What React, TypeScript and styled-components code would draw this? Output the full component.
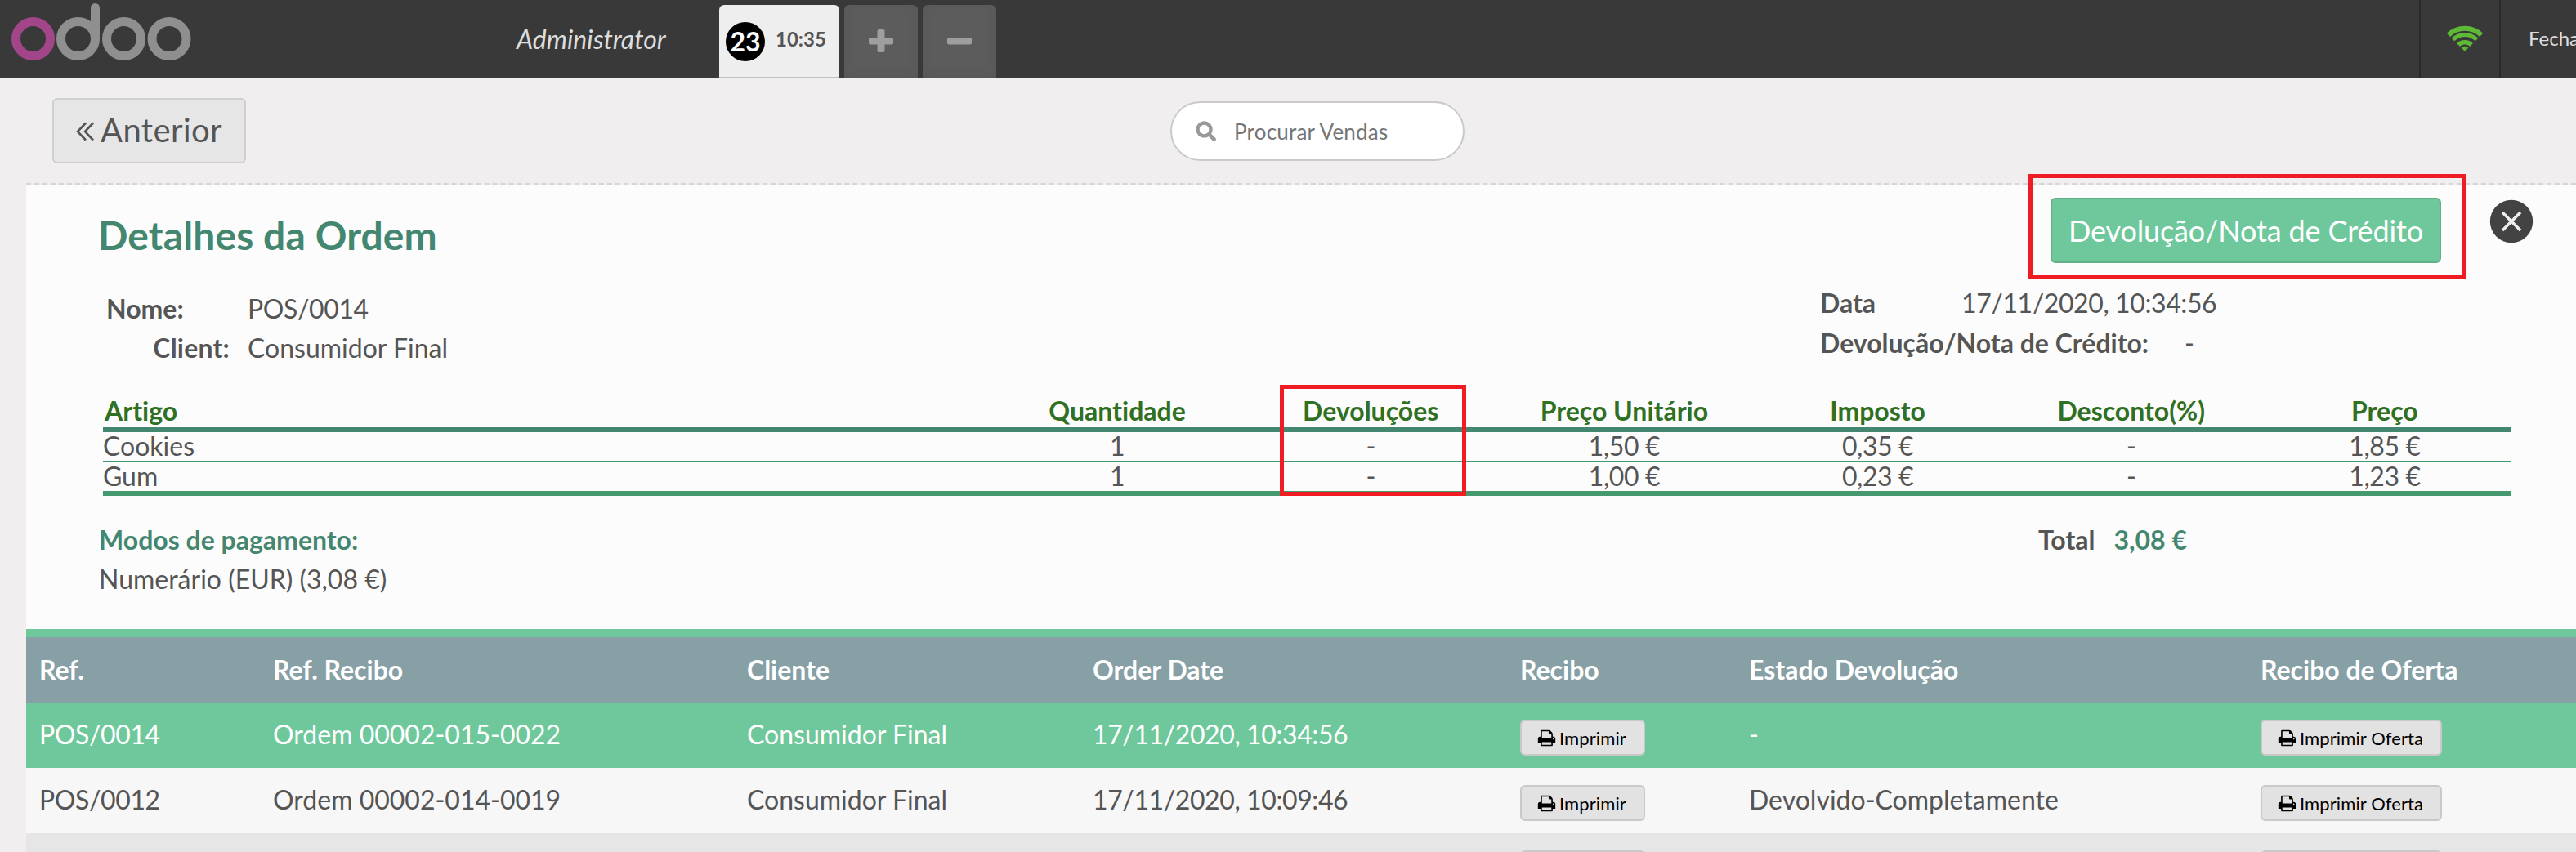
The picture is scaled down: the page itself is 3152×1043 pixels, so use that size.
import React from 'react';
import styled, { createGlobalStyle } from 'styled-components';

const GlobalStyle = createGlobalStyle`
  *, *::before, *::after { box-sizing: border-box; }
  body {
    margin: 0;
    overflow: hidden;
    background: #f0eeef;
    color: #555;
    font-family: Lato, "Open Sans", sans-serif;
    font-size: 32px;
    font-variant-ligatures: none;
  }
  button { font-family: inherit; cursor: pointer; }
`;

const Page = styled.div`
  position: relative;
  display: flex;
  flex-direction: column;
  width: 3152px;
  height: 1043px;
  overflow: hidden;
  white-space: nowrap;
`;

/* ---------- top bar ---------- */

const TopBar = styled.header`
  flex: none;
  display: flex;
  align-items: stretch;
  height: 96px;
  background: #393939;
  overflow: hidden;
`;

const Brand = styled.div`
  width: 632px;
  padding-left: 14px;
  svg { display: block; }
`;

const Username = styled.div`
  width: 248px;
  line-height: 96px;
  font-style: italic;
  color: #ddd;
`;

const Orders = styled.nav`
  display: flex;
  gap: 6px;
  padding-top: 6px;
`;

const OrderTab = styled.div`
  display: flex;
  align-items: center;
  width: 147px;
  padding: 0 0 0 8px;
  border-radius: 6px 6px 0 0;
  border-bottom: 2px solid #bfbfbf;
  background: #eee;
`;

const OrderNumber = styled.span`
  width: 48px;
  height: 48px;
  margin-top: 2px;
  border-radius: 50%;
  background: #000;
  color: #fff;
  font-weight: 700;
  line-height: 47px;
  text-align: center;
`;

const OrderTime = styled.span`
  margin: -6px 0 0 13px;
  font-size: 24px;
  font-weight: 700;
`;

const SquareTab = styled.button`
  width: 90px;
  padding: 0;
  border: 0;
  border-radius: 6px 6px 0 0;
  background: #5c5c5c;
  box-shadow: inset 0 -4px 16px rgba(0, 0, 0, 0.06);
  svg { display: block; margin: -2px auto 0; }
`;

const BarRight = styled.div`
  display: flex;
  margin-left: auto;
  width: 192px;
`;

const BarItem = styled.div<{ $width: number }>`
  flex: none;
  width: ${p => p.$width}px;
  border-left: 2px solid #292929;
  padding-left: 34px;
  font-size: 24px;
  line-height: 94px;
  color: #ddd;
  svg { display: block; margin-top: 31px; margin-left: -2px; }
`;

/* ---------- tool row ---------- */

const Tools = styled.div`
  flex: none;
  display: flex;
  align-items: flex-start;
  height: 128px;
  padding: 24px 0 0 64px;
`;

const BackButton = styled.button`
  display: flex;
  align-items: center;
  gap: 7px;
  width: 237px;
  height: 80px;
  padding: 0 0 2px 27px;
  border: 2px solid #cfcfcf;
  border-radius: 6px;
  background: #e6e6e6;
  color: #555;
  font-size: 40px;
  letter-spacing: 0.4px;
  svg { margin-top: 4px; }
`;

const SearchBox = styled.label`
  display: flex;
  align-items: center;
  gap: 22px;
  width: 360px;
  height: 73px;
  margin: 4px 0 0 1131px;
  padding-left: 29px;
  border: 2px solid #cacaca;
  border-radius: 37px;
  background: #fff;
`;

const SearchInput = styled.input`
  width: 240px;
  padding: 0;
  border: 0;
  outline: 0;
  background: none;
  font: 26px Lato, sans-serif;
  letter-spacing: 0.2px;
  &::placeholder { color: #757575; opacity: 1; }
`;

/* ---------- order details ---------- */

const Details = styled.section`
  flex: none;
  height: 546px;
  margin-left: 32px;
  border-top: 2px dashed #d6d6d6;
  background: #fcfcfc;
  background-clip: padding-box;
`;

const TitleRow = styled.div`
  display: flex;
  align-items: flex-start;
  height: 96px;
  padding: 16px 52px 0 88px;
`;

const Title = styled.h1`
  margin: 17px 0 0;
  font-size: 48px;
  line-height: 58px;
  font-weight: 700;
  letter-spacing: 0.1px;
  color: #448770;
`;

const RefundButton = styled.button`
  width: 478px;
  height: 80px;
  margin-left: auto;
  padding: 0 0 1px;
  border: 2px solid #62b089;
  border-radius: 6px;
  background: #6ec89b;
  color: #fff;
  font-size: 36px;
  letter-spacing: -0.14px;
`;

const CloseButton = styled.button`
  width: 54px;
  height: 54px;
  margin: 2px 0 0 59px;
  padding: 0;
  border: 0;
  background: none;
  svg { display: block; }
`;

const InfoRow = styled.div`
  display: flex;
  height: 161px;
  padding: 24px 0 0 98px;
`;

const InfoLeft = styled.div`
  width: 2097px;
  padding-top: 8px;
`;

const InfoRight = styled.div`
  flex: 1;
`;

const Field = styled.div<{ $label: number; $gap: number; $end?: boolean; $line?: number }>`
  display: flex;
  gap: ${p => p.$gap}px;
  line-height: ${p => p.$line ?? 48}px;
  b {
    width: ${p => p.$label}px;
    text-align: ${p => (p.$end ? 'right' : 'left')};
    letter-spacing: ${p => (p.$end ? 0.2 : 0)}px;
  }
`;

/* Figures are set a little tighter than running text */
const Figures = styled.span`
  letter-spacing: -0.4px;
`;

const Lines = styled.div`
  width: 2947px;
  margin-left: 94px;
  border-bottom: 6px solid #46986f;
`;

const Line = styled.div`
  display: grid;
  grid-template-columns: 1086px repeat(6, 1fr);
  height: 37px;
  line-height: 33px;
  border-bottom: 2px solid #46986f;
  text-align: center;
  > :first-child { text-align: left; letter-spacing: 0; }
  &:last-child { height: 35px; border-bottom: 0; }
`;

const LineHead = styled(Line)`
  height: 46px;
  line-height: 40px;
  border-bottom: 6px solid #448770;
  font-weight: 700;
  color: #2f7022;
  > :first-child { padding-left: 2px; }
`;

const Summary = styled.div`
  display: flex;
  padding: 30px 0 0 89px;
  line-height: 48px;
`;

const Payments = styled.div`
  width: 2373px;
`;

const Accent = styled.b`
  color: #448770;
`;

const Total = styled.div`
  display: flex;
  gap: 23px;
`;

/* ---------- orders list ---------- */

const List = styled.section`
  flex: none;
  margin-left: 32px;
  border-top: 10px solid #6ec89b;
`;

const tones = {
  head: { bg: '#87a0a5', fg: '#fff' },
  active: { bg: '#6ec89b', fg: '#fff' },
  light: { bg: '#f7f7f7', fg: '#555' },
  dark: { bg: '#e6e6e6', fg: '#555' },
};

const ListRow = styled.div<{ $tone: keyof typeof tones }>`
  display: grid;
  grid-template-columns: 286px 580px 423px 523px 280px 626px 1fr;
  height: 80px;
  padding-left: 16px;
  line-height: ${p => (p.$tone === 'head' ? 80 : 77)}px;
  font-weight: ${p => (p.$tone === 'head' ? 700 : 400)};
  background: ${p => tones[p.$tone].bg};
  color: ${p => tones[p.$tone].fg};
`;

const PrintButton = styled.button<{ $width: number }>`
  display: flex;
  align-items: center;
  gap: 4px;
  width: ${p => p.$width}px;
  height: 44px;
  margin: 21px 0 0;
  padding: 0 0 0 19px;
  border: 2px solid #c9c9c9;
  border-radius: 6px;
  background: #e2e2e2;
  color: #000;
  font-size: 22px;
  letter-spacing: 0.1px;
`;

/* Red frames drawn over the screen to point at the refund controls */
const Marker = styled.div<{ $x: number; $y: number; $w: number; $h: number }>`
  position: absolute;
  left: ${p => p.$x}px;
  top: ${p => p.$y}px;
  width: ${p => p.$w}px;
  height: ${p => p.$h}px;
  border: 5px solid #f01c24;
  pointer-events: none;
`;

const Logo = () => (
  <svg width="220" height="80" viewBox="0 0 220 80" fill="none" strokeWidth="11">
    <circle cx="26.5" cy="47.5" r="21" stroke="#a24689" />
    <g stroke="#8f8f8f">
      <circle cx="81.5" cy="47.5" r="21" />
      <path d="M102.5 47.5V9.5" strokeLinecap="round" />
      <circle cx="137.5" cy="47.5" r="21" />
      <circle cx="193" cy="47.5" r="21" />
    </g>
  </svg>
);

const Wifi = () => (
  <svg width="44" height="34" viewBox="0 0 44 34" fill="none" stroke="#5eb937">
    <path d="M1.9 11.9A29 29 0 0 1 42.1 11.9" strokeWidth="6" />
    <path d="M7.5 17.5A20.5 20.5 0 0 1 36.5 17.5" strokeWidth="5.2" />
    <path d="M13.9 23.9A11.5 11.5 0 0 1 30.1 23.9" strokeWidth="5.2" />
    <path d="M22 31.5L18.2 27.7A5.4 5.4 0 0 1 25.8 27.7Z" fill="#5eb937" strokeWidth="0.8" strokeLinejoin="round" />
  </svg>
);

const Printer = () => (
  <svg width="23" height="23" viewBox="0 0 1792 1792">
    <path d="M448 1536h896v-256h-896v256zm0-640h896v-384h-160q-40 0-68-28t-28-68v-160h-640v640zm1152 64q0-26-19-45t-45-19-45 19-19 45 19 45 45 19 45-19 19-45zm128 0v416q0 13-9.5 22.5t-22.5 9.5h-224v160q0 40-28 68t-68 28h-960q-40 0-68-28t-28-68v-160h-224q-13 0-22.5-9.5t-9.5-22.5v-416q0-79 56.5-135.5t135.5-56.5h64v-544q0-40 28-68t68-28h672q40 0 88 20t76 48l152 152q28 28 48 76t20 88v256h64q79 0 135.5 56.5t56.5 135.5z" />
  </svg>
);

const SearchIcon = () => (
  <svg width="25" height="25" viewBox="0 0 25 25" fill="none" stroke="#999">
    <circle cx="10.5" cy="10.5" r="8" strokeWidth="4.4" />
    <path d="M16.5 16.5L22.5 22.5" strokeWidth="4.6" strokeLinecap="round" />
  </svg>
);

const Print = ({ width, children }: { width: number; children: string }) => (
  <PrintButton $width={width}><Printer />{children}</PrintButton>
);

const lineHeads = ['Artigo', 'Quantidade', 'Devoluções', 'Preço Unitário', 'Imposto', 'Desconto(%)', 'Preço'];
const lines = [
  ['Cookies', '1', '-', '1,50 €', '0,35 €', '-', '1,85 €'],
  ['Gum', '1', '-', '1,00 €', '0,23 €', '-', '1,23 €'],
];

const listHeads = ['Ref.', 'Ref. Recibo', 'Cliente', 'Order Date', 'Recibo', 'Estado Devolução', 'Recibo de Oferta'];

interface Order {
  tone: keyof typeof tones;
  name: string;
  receipt: string;
  client: string;
  date: string;
  state: string;
}

const orders: Order[] = [
  { tone: 'active', name: 'POS/0014', receipt: 'Ordem 00002-015-0022', client: 'Consumidor Final', date: '17/11/2020, 10:34:56', state: '-' },
  { tone: 'light', name: 'POS/0012', receipt: 'Ordem 00002-014-0019', client: 'Consumidor Final', date: '17/11/2020, 10:09:46', state: 'Devolvido-Completamente' },
  { tone: 'dark', name: '', receipt: '', client: '', date: '', state: '' },
];

export default function App() {
  return (
    <Page>
      <GlobalStyle />
      <TopBar>
        <Brand><Logo /></Brand>
        <Username>Administrator</Username>
        <Orders>
          <OrderTab>
            <OrderNumber>23</OrderNumber>
            <OrderTime>10:35</OrderTime>
          </OrderTab>
          <SquareTab>
            <svg width="30" height="28" fill="#9e9e9e">
              <rect x="0" y="10" width="30" height="8.5" rx="2" />
              <rect x="10.5" y="0" width="9" height="28" rx="2" />
            </svg>
          </SquareTab>
          <SquareTab>
            <svg width="30" height="28" fill="#9e9e9e">
              <rect x="0" y="10" width="30" height="8.5" rx="2" />
            </svg>
          </SquareTab>
        </Orders>
        <BarRight>
          <BarItem $width={98}><Wifi /></BarItem>
          <BarItem $width={140}>Fecha</BarItem>
        </BarRight>
      </TopBar>

      <Tools>
        <BackButton>
          <svg width="23" height="24" viewBox="0 0 23 24" fill="none" stroke="#555" strokeWidth="2.6">
            <path d="M12 1.5L2 12L12 22.5M21 1.5L11 12L21 22.5" />
          </svg>
          Anterior
        </BackButton>
        <SearchBox>
          <SearchIcon />
          <SearchInput placeholder="Procurar Vendas" />
        </SearchBox>
      </Tools>

      <Details>
        <TitleRow>
          <Title>Detalhes da Ordem</Title>
          <RefundButton>Devolução/Nota de Crédito</RefundButton>
          <CloseButton>
            <svg width="54" height="54" viewBox="0 0 54 54">
              <circle cx="27" cy="27" r="26.2" fill="#434343" />
              <path d="M16 16L38 38M38 16L16 38" stroke="#eee" strokeWidth="3.6" />
            </svg>
          </CloseButton>
        </TitleRow>
        <InfoRow>
          <InfoLeft>
            <Field $label={151} $gap={22}><b>Nome:</b><Figures>POS/0014</Figures></Field>
            <Field $label={151} $gap={22} $end><b>Client:</b><span>Consumidor Final</span></Field>
          </InfoLeft>
          <InfoRight>
            <Field $label={151} $gap={22} $line={49}><b>Data</b><Figures>17/11/2020, 10:34:56</Figures></Field>
            <Field $label={402} $gap={44} $line={49}><b>Devolução/Nota de Crédito:</b><span>-</span></Field>
          </InfoRight>
        </InfoRow>
        <Lines>
          <LineHead>{lineHeads.map(h => <span key={h}>{h}</span>)}</LineHead>
          {lines.map(line => (
            <Line key={line[0]}>{line.map((c, i) => <Figures key={i}>{c}</Figures>)}</Line>
          ))}
        </Lines>
        <Summary>
          <Payments>
            <Accent>Modos de pagamento:</Accent>
            <div>Numerário (EUR) (3,08 €)</div>
          </Payments>
          <Total><b>Total</b><Accent>3,08 €</Accent></Total>
        </Summary>
      </Details>

      <List>
        <ListRow $tone="head">{listHeads.map(h => <span key={h}>{h}</span>)}</ListRow>
        {orders.map(order => (
          <ListRow key={order.tone} $tone={order.tone}>
            <Figures>{order.name}</Figures>
            <span>{order.receipt}</span>
            <span>{order.client}</span>
            <Figures>{order.date}</Figures>
            <Print width={153}>Imprimir</Print>
            <span>{order.state}</span>
            <Print width={222}>Imprimir Oferta</Print>
          </ListRow>
        ))}
      </List>

      <Marker $x={2482} $y={213} $w={535} $h={129} />
      <Marker $x={1566} $y={471} $w={228} $h={136} />
    </Page>
  );
}
